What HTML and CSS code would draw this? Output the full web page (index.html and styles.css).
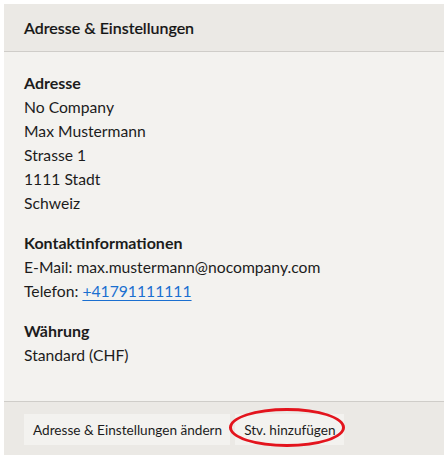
FILE: index.html
```html
<!DOCTYPE html>
<html lang="de">
<head>
<meta charset="utf-8">
<link rel="stylesheet" href="styles.css">
</head>
<body>
<div class="card">
  <div class="card-header">Adresse &amp; Einstellungen</div>
  <div class="card-body">
    <section class="group">
      <h3>Adresse</h3>
      <div>No Company</div>
      <div>Max Mustermann</div>
      <div>Strasse 1</div>
      <div>1111 Stadt</div>
      <div>Schweiz</div>
    </section>
    <section class="group">
      <h3>Kontaktinformationen</h3>
      <div>E-Mail: max.mustermann@nocompany.com</div>
      <div>Telefon: <a href="#">+41791111111</a></div>
    </section>
    <section class="group">
      <h3>Währung</h3>
      <div>Standard (CHF)</div>
    </section>
  </div>
  <div class="card-footer">
    <button class="btn">Adresse &amp; Einstellungen ändern</button>
    <button class="btn btn-marked">Stv. hinzufügen</button>
  </div>
</div>
</body>
</html>
```
FILE: styles.css
```css
html, body { margin: 0; padding: 0; background: #fff; }
body {
  padding: 4px;
  font-family: Lato, "Open Sans", sans-serif;
  color: #1c1c1c;
}
.card {
  background: #f3f2ef;
  width: 440px;
  height: 451px;
  display: flex;
  flex-direction: column;
}
.card-header {
  background: #ebe9e5;
  height: 47px;
  border-bottom: 1px solid #cfcdc9;
  padding: 0 20px;
  font-size: 16px;
  font-weight: 500;
  line-height: 47px;
  color: #141414;
  -webkit-text-stroke: 0.2px #141414;
}
.card-body {
  flex: 1;
  padding: 19px 20px 0;
  font-size: 15.7px;
  line-height: 24px;
}
.group { margin-bottom: 16px; }
.group h3 {
  margin: 0;
  font-size: 16px;
  font-weight: 700;
}
.group a { color: #1a6fd0; text-underline-offset: 3px; }
.card-footer {
  background: #ebe9e5;
  border-top: 1px solid #cfcdc9;
  padding: 12px 20px 10px;
  display: flex;
  gap: 5px;
}
.btn {
  background: #f3f2ef;
  border: 0;
  height: 31px;
  padding: 0 8px 0 9px;
  font-family: inherit;
  font-size: 13.6px;
  color: #1c1c1c;
  position: relative;
}
.btn-marked::after {
  content: "";
  position: absolute;
  left: -6px;
  right: -1px;
  top: -6px;
  bottom: -2px;
  border: 3px solid #e3141d;
  border-radius: 50%;
}
```
